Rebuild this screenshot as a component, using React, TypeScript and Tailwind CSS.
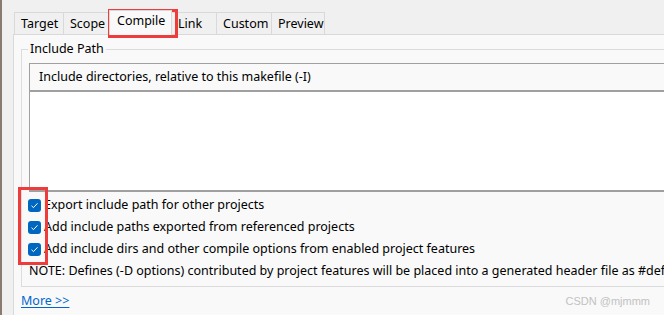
import React from "react";

const font = { fontFamily: '"Noto Sans", "Open Sans", Arial, sans-serif' };

function Check() {
  return (
    <span className="w-[13px] h-[13px] rounded-[3px] bg-[#0067c0] flex items-center justify-center shrink-0">
      <svg width="9" height="9" viewBox="0 0 9 9">
        <path d="M1.5 4.8 L3.5 6.6 L7.5 2.3" stroke="#ffffff" strokeWidth="1" fill="none" />
      </svg>
    </span>
  );
}

export default function App() {
  const tabs = ["Target", "Scope", "Compile", "Link", "Custom", "Preview"];
  const widths = ["w-[50px]", "w-[46px]", "w-[63px]", "w-[46px]", "w-[56px]", "w-[54px]"];
  return (
    <div
      className="relative w-[664px] h-[315px] bg-[#f0f0f0] overflow-hidden flex text-[12.5px] text-[#000]"
      style={font}
    >
      <div className="w-[2px] bg-[#8a7a70] shrink-0" />
      <div className="flex-1 min-w-0 flex flex-col pl-[11px]">
        {/* tabs */}
        <div className="flex items-end h-[34px] pl-[1px]">
          {tabs.map((t, i) =>
            i === 2 ? (
              <div
                key={t}
                className={`${widths[i]} h-[25px] bg-[#f9f9f9] border border-b-0 border-[#d9d9d9] flex items-start pt-[1px] pl-[7px] -mb-[1px] relative z-10`}
              >
                {t}
              </div>
            ) : (
              <div
                key={t}
                className={`${widths[i]} h-[22px] bg-[#f0f0f0] border border-b-0 border-[#d9d9d9] -ml-[1px] first:ml-0 flex items-center pl-[6px] pt-[1px]`}
              >
                {t}
              </div>
            )
          )}
        </div>
        {/* panel */}
        <div className="flex-1 min-w-0 overflow-hidden bg-[#f9f9f9] border-l border-t border-[#d9d9d9] pl-[7px] pt-[7px] flex flex-col">
          <div className="relative border-l border-t border-b border-[#dcdcdc] mt-[7px] h-[238px] pt-[13px] pl-[7px]">
            <span className="absolute -top-[10px] left-[6px] bg-[#f9f9f9] px-[2px] leading-[18px]">
              Include Path
            </span>
            <div className="flex flex-col">
              <div className="h-[29px] bg-[#f9f9f9] border-t border-[#a0a0a0] border-l border-[#a0a0a0] flex items-center pl-[9px] border-b-2 border-b-[#a0a0a0]">
                Include directories, relative to this makefile (-I)
              </div>
              <div className="h-[100px] bg-white border-l border-b-2 border-[#a0a0a0]" />
            </div>
            <div className="flex flex-col mt-[2px] -ml-[1px]">
              <label className="flex items-center h-[22px] gap-[3px]">
                <Check />
                <span>Export include path for other projects</span>
              </label>
              <label className="flex items-center h-[22px] gap-[3px]">
                <Check />
                <span>Add include paths exported from referenced projects</span>
              </label>
              <label className="flex items-center h-[22px] gap-[3px]">
                <Check />
                <span>Add include dirs and other compile options from enabled project features</span>
              </label>
              <div className="h-[22px] flex items-center pl-[1px] whitespace-nowrap">
                NOTE: Defines (-D options) contributed by project features will be placed into a generated header file as #define
              </div>
            </div>
          </div>
          <div className="flex items-center justify-between h-[28px] pr-[14px]">
            <a className="text-[#0066cc] underline underline-offset-2">More &gt;&gt;</a>
            <span className="text-[#c2c2c2] text-[11px]" style={{ fontFamily: '"Liberation Sans", Arial, sans-serif' }}>
              CSDN @mjmmm
            </span>
          </div>
        </div>
      </div>
      {/* annotation boxes */}
      <div className="absolute left-[108px] top-[9px] w-[70px] h-[29px] border-[3px] border-[#ee3b3b] pointer-events-none" />
      <div className="absolute left-[18px] top-[187px] w-[30px] h-[78px] border-[3px] border-[#ee3b3b] pointer-events-none" />
    </div>
  );
}
